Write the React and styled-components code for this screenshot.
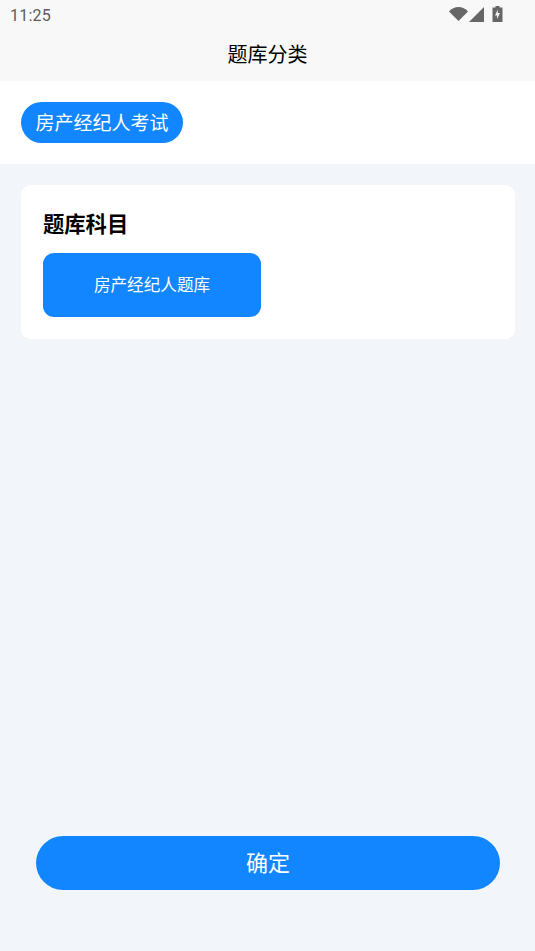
import React from 'react';
import styled, { createGlobalStyle } from 'styled-components';

const GlobalStyle = createGlobalStyle`
  html, body {
    margin: 0;
    padding: 0;
    background: #f2f5f9;
  }
  * {
    box-sizing: border-box;
  }
`;

const Page = styled.div`
  width: 535px;
  height: 951px;
  display: flex;
  flex-direction: column;
  background: #f2f5f9;
  font-family: Roboto, "Noto Sans CJK SC", sans-serif;
  overflow: hidden;
`;

const Header = styled.header`
  height: 81px;
  background: #f8f8f8;
  display: flex;
  flex-direction: column;
`;

const StatusBar = styled.div`
  height: 28px;
  padding: 0 32px 0 10px;
  display: flex;
  align-items: center;
  justify-content: space-between;
`;

const Clock = styled.span`
  font-size: 16px;
  color: #5c5c5c;
  letter-spacing: 0.25px;
  margin-top: 2px;
`;

const StatusIcons = styled.div`
  display: flex;
  align-items: center;
  gap: 1px;
`;

const Title = styled.h1`
  margin: 0;
  height: 51px;
  display: flex;
  align-items: center;
  justify-content: center;
  font-size: 20px;
  font-weight: 400;
  color: #000;
`;

const Tabs = styled.div`
  height: 83px;
  margin-bottom: 21px;
  padding: 21px;
  background: #fff;
`;

const Pill = styled.div`
  display: inline-flex;
  align-items: center;
  justify-content: center;
  width: 162px;
  height: 41px;
  padding-bottom: 2px;
  border-radius: 21px;
  background: #1186ff;
  color: #fff;
  font-size: 19px;
`;

const Card = styled.section`
  margin: 0 20px 0 21px;
  height: 154px;
  padding: 21px 22px;
  background: #fff;
  border-radius: 10px;
`;

const CardTitle = styled.h2`
  margin: 0 0 14px;
  height: 33px;
  display: flex;
  align-items: center;
  font-size: 21.3px;
  font-weight: 700;
  color: #000;
`;

const Subject = styled.div`
  width: 218px;
  height: 64px;
  padding-bottom: 2px;
  display: flex;
  align-items: center;
  justify-content: center;
  border-radius: 11px;
  background: #1186ff;
  color: #fff;
  font-size: 16.6px;
`;

const Footer = styled.div`
  margin-top: auto;
  padding: 0 35px 61px 36px;
`;

const Confirm = styled.button`
  width: 100%;
  height: 54px;
  padding: 0 0 5px;
  border: 0;
  border-radius: 27px;
  background: #1186ff;
  color: #fff;
  font-family: inherit;
  font-size: 22px;
`;

function Wifi() {
  return (
    <svg width="19" height="14" viewBox="0 0 19 14">
      <path d="M0 4.500C2.500 1.700 5.800 0 9.500 0S16.500 1.700 19 4.500L9.500 14Z" fill="#666" />
    </svg>
  );
}

function Signal() {
  return (
    <svg width="15" height="15" viewBox="0 0 15 15">
      <path d="M15 0V15H0Z" fill="#666" />
    </svg>
  );
}

function Battery() {
  return (
    <svg width="11" height="16" viewBox="0 0 11 16" style={{ marginLeft: 7 }}>
      <path d="M3.500 0H7.500V1.500H10.500V16H0.500V1.500H3.500Z" fill="#666" />
      <path d="M5.800 3.500V7H8L5 13V9.500H3Z" fill="#f8f8f8" />
    </svg>
  );
}

export default function App() {
  return (
    <Page>
      <GlobalStyle />
      <Header>
        <StatusBar>
          <Clock>11:25</Clock>
          <StatusIcons>
            <Wifi />
            <Signal />
            <Battery />
          </StatusIcons>
        </StatusBar>
        <Title>题库分类</Title>
      </Header>
      <Tabs>
        <Pill>房产经纪人考试</Pill>
      </Tabs>
      <Card>
        <CardTitle>题库科目</CardTitle>
        <Subject>房产经纪人题库</Subject>
      </Card>
      <Footer>
        <Confirm>确定</Confirm>
      </Footer>
    </Page>
  );
}
